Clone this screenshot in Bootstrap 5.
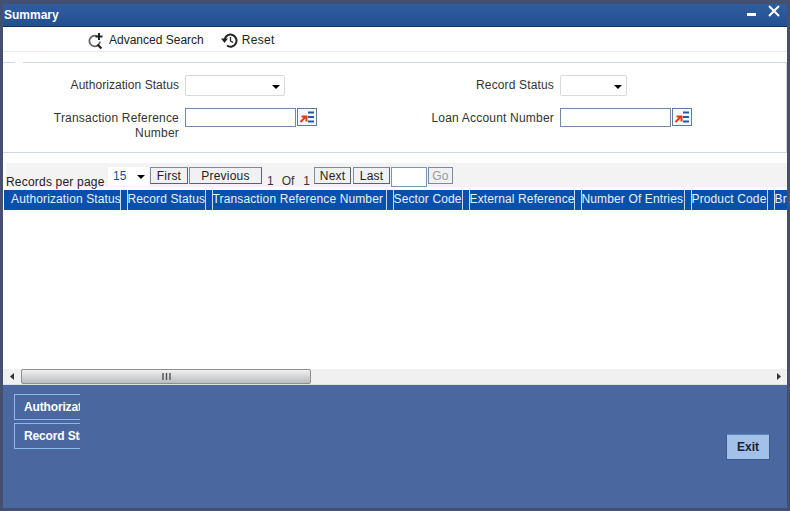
<!DOCTYPE html>
<html lang="en"><head><meta charset="utf-8"><title>Summary</title>
<link rel="stylesheet" href="https://cdn.jsdelivr.net/npm/bootstrap@5.3.0/dist/css/bootstrap.min.css">
<style>
html,body{height:511px;overflow:hidden}
body{background:#454f70;font-family:"Liberation Sans",Arial,sans-serif;font-size:12px;color:#333;line-height:15px}
.win{margin:4px 3px 3px;height:504px;width:784px;background:#fff}
.tbar{height:23px;background:linear-gradient(#2f5e9f,#234f90);border-bottom:1px solid #12305f;color:#fff;font-weight:700;padding:1px 0 0 1px}
.wctl{margin-right:7px}
.tools{height:25px;border-bottom:1px solid #e8ebee;padding:2px 0 0 85px;gap:17px;color:#222}
.tools span{gap:4px}
.rtxt{letter-spacing:.3px}
.filt{margin:10px 0 0;border:1px solid #cdd8e3;border-left:0;padding:0;height:91px}
.filt legend{float:none;width:8px;height:1px;margin:-1px 0 0 12px;padding:0;background:#fff;display:block}
.fgrp{width:375px;gap:6px}
.flab{width:176px;text-align:right;letter-spacing:.15px}
.flab0{letter-spacing:.05px}
.flab2{letter-spacing:.2px;padding-top:3px}
.fsel{height:21px;border:1px solid #d6dadd;border-radius:2px;background:#fff;position:relative}
.w100{width:100px}.w67{width:67px}
.fsel::after{content:"";position:absolute;right:4px;top:9px;border:4px solid transparent;border-top-color:#000;border-bottom:0}
.finp{width:111px;height:19px;border:1px solid #6f8aa6;background:#fff}
.lov{width:20px;height:18px;border:1px solid #5d7c9e;background:#f6f9fc;margin-left:1px;padding:0;border-radius:0;line-height:0}
.pager{margin:10px 0 3px 3px;height:24px;background:#f3f3f3;color:#222}
.plab{width:102px;padding:12px 0 0 0;letter-spacing:.2px}
.psel{width:41px;height:19px;margin-top:4px;padding-left:5px;position:relative;background:#fff;color:#1d4b8e;line-height:19px}
.psel::after{content:"";position:absolute;right:4px;top:8px;border:4px solid transparent;border-top-color:#000;border-bottom:0}
.pbtn{height:17px;margin:4px 0 0 1px;padding:2px 0 0;border:1px solid #7f8b98;border-bottom-color:#59636e;border-right-color:#59636e;background:#f0f1f2;border-radius:0;font-size:12px;line-height:13px;color:#222;letter-spacing:.2px}
.pbtn:disabled{color:#999;opacity:1;background:#f0f1f2;border-color:#7f8b98}
.w38{width:38px}.w73{width:73px}.wnext{width:37px}.wlast{width:37px;margin-left:2px}.w25{width:25px}
.pnum{padding-top:11px;color:#333}
.n1{margin-left:5px}.n2{margin-left:8px}.n3{margin-left:9px;margin-right:3px}
.pinp{width:36px;height:20px;margin-top:4px;margin-left:1px;border:1px solid #7d96b0;background:#fff}
.gridw{flex:1 1 auto;min-height:0;overflow:hidden;margin-left:1px}
.ghead{border-collapse:collapse;table-layout:fixed;width:800px;background:#0850ac;color:#e8f0fb;height:20px}
.ghead th{font-weight:400;padding:0 0 1px;white-space:nowrap;overflow:hidden;border-right:1px solid #c9d9ee;line-height:15px;letter-spacing:.13px}
.c1{width:116px;padding-left:7px!important}.c2{width:78px}.c3{width:174px}.c4{width:69px}.c5{width:105px}.c6{width:103px}.c7{width:76px}.c8{width:30px}.gs{width:7px}
.sbar{height:16px;background:#f0f0f0;border-bottom:1px solid #dfe3e8}
.sarr{width:18px}
.sthumb{width:290px;height:15px;border:1px solid #8b8f93;border-radius:2px;background:linear-gradient(#f1f1f1,#cfd0d1 60%,#bbbcbd)}
.foot{height:123px;background:#4a67a0;padding:9px 17px 0 11px}
.fbtn{width:66px;height:26px;overflow:hidden;white-space:nowrap;border:1px solid #8ab9ef;border-right:0;color:#fff;font-weight:700;padding:4px 0 0 9px;margin-bottom:3px;line-height:16px;letter-spacing:-.15px}
.exit{width:44px;height:26px;margin-top:40px;padding:0;border:1px solid #38598a;border-top-color:#5f82b2;background:#a2c0e8;border-radius:0;font-size:12px;font-weight:700;color:#1c2430}
.exit:hover{background:#a2c0e8;color:#1c2430}
</style></head>
<body>
<div class="win d-flex flex-column">
 <div class="tbar d-flex align-items-center justify-content-between flex-shrink-0">
  <span>Summary</span>
  <svg width="33" height="14" viewBox="0 0 33 14" class="wctl align-self-start"><path d="M0 8h9v3H0z" fill="#fff"/><path d="M22 1l10 10M32 1L22 11" stroke="#fff" stroke-width="2" fill="none"/></svg>
 </div>
 <div class="tools d-flex align-items-center flex-shrink-0">
  <span class="d-flex align-items-center"><svg width="17" height="17" viewBox="0 0 17 17"><path d="M9 4.200A5.300 5.300 0 1 0 12 9.500" fill="none" stroke="#666" stroke-width="1.800"/><path d="M9.500 12.500l4 4" stroke="#222" stroke-width="2.200"/><path d="M11 1v7M7.500 4.500h7" stroke="#222" stroke-width="2"/></svg>Advanced Search</span>
  <span class="d-flex align-items-center"><svg width="17" height="15" viewBox="0 0 17 15"><path d="M3.500 7.500a6 6 0 1 1 2.500 5" fill="none" stroke="#222" stroke-width="2"/><path d="M0 5.500h7L3.500 10z" fill="#222"/><path d="M9.500 4v4l2.500 1.500" fill="none" stroke="#222" stroke-width="1.300"/></svg><b class="rtxt fw-normal">Reset</b></span>
 </div>
 <fieldset class="filt flex-shrink-0">
  <legend></legend>
  <div class="d-flex align-items-center mt-2 pt-1">
   <div class="fgrp d-flex align-items-center"><label class="flab flab0">Authorization Status</label><div class="fsel w100"></div></div>
   <div class="fgrp d-flex align-items-center"><label class="flab">Record Status</label><div class="fsel w67"></div></div>
  </div>
  <div class="d-flex mt-2 pt-1">
   <div class="fgrp d-flex align-items-start"><label class="flab flab2">Transaction Reference<br>Number</label><div class="d-flex"><div class="finp"></div><button class="lov btn" aria-label="List"><svg width="18" height="16" viewBox="0 0 18 16"><path d="M2.500 13l5-5M3.500 7.500h5v5" stroke="#e03a12" stroke-width="2" fill="none"/><path d="M10 3.500h6M10 8h6M10 12.500h6" stroke="#1c5ca8" stroke-width="2"/></svg></button></div></div>
   <div class="fgrp d-flex align-items-start"><label class="flab flab2">Loan Account Number</label><div class="d-flex"><div class="finp"></div><button class="lov btn" aria-label="List"><svg width="18" height="16" viewBox="0 0 18 16"><path d="M2.500 13l5-5M3.500 7.500h5v5" stroke="#e03a12" stroke-width="2" fill="none"/><path d="M10 3.500h6M10 8h6M10 12.500h6" stroke="#1c5ca8" stroke-width="2"/></svg></button></div></div>
  </div>
 </fieldset>
 <div class="pager d-flex flex-shrink-0">
  <span class="plab">Records per page</span>
  <div class="psel">15</div>
  <button class="pbtn btn w38">First</button>
  <button class="pbtn btn w73">Previous</button>
  <span class="pnum n1">1</span><span class="pnum n2">Of</span><span class="pnum n3">1</span>
  <button class="pbtn btn wnext">Next</button>
  <button class="pbtn btn wlast">Last</button>
  <div class="pinp"></div>
  <button class="pbtn btn w25" disabled>Go</button>
 </div>
 <div class="gridw">
  <table class="ghead"><tbody><tr>
   <th class="c1">Authorization Status</th><th class="gs"></th>
   <th class="c2">Record Status</th><th class="gs"></th>
   <th class="c3">Transaction Reference Number</th><th class="gs"></th>
   <th class="c4">Sector Code</th><th class="gs"></th>
   <th class="c5">External Reference</th><th class="gs"></th>
   <th class="c6">Number Of Entries</th><th class="gs"></th>
   <th class="c7">Product Code</th><th class="gs"></th>
   <th class="c8">Branch</th>
  </tr></tbody></table>
 </div>
 <div class="sbar d-flex align-items-center flex-shrink-0">
  <div class="sarr d-flex justify-content-center"><svg width="5" height="7" viewBox="0 0 5 7"><path d="M4 0v7L0 3.500z" fill="#333"/></svg></div>
  <div class="sthumb d-flex align-items-center justify-content-center"><svg width="9" height="7" viewBox="0 0 9 7"><path d="M1 0v7M4.500 0v7M8 0v7" stroke="#555" stroke-width="1.400"/></svg></div>
  <div class="flex-grow-1"></div>
  <div class="sarr d-flex justify-content-center"><svg width="5" height="7" viewBox="0 0 5 7"><path d="M1 0v7l4-3.500z" fill="#333"/></svg></div>
 </div>
 <div class="foot d-flex justify-content-between flex-shrink-0">
  <div><div class="fbtn">Authorization Status</div><div class="fbtn">Record Status</div></div>
  <button class="exit btn">Exit</button>
 </div>
</div>
<script src="https://cdn.jsdelivr.net/npm/bootstrap@5.3.0/dist/js/bootstrap.bundle.min.js"></script>
</body></html>
